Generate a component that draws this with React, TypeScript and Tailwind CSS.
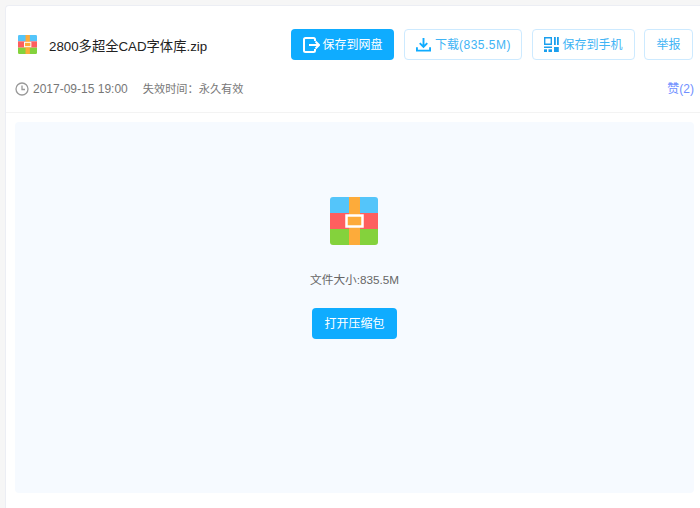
import React from "react";

const fontStack = "font-['Liberation_Sans','Noto_Sans_CJK_SC',sans-serif]";

const ZipIcon = ({ className }: { className: string }) => (
  <svg viewBox="0 0 48 48" className={className}>
    <defs>
      <clipPath id="zip-clip">
        <rect width="48" height="48" rx="3" />
      </clipPath>
    </defs>
    <g clipPath="url(#zip-clip)">
      <rect width="48" height="16" fill="#54c5fa" />
      <rect y="16" width="48" height="16" fill="#fe5f5f" />
      <rect y="32" width="48" height="16" fill="#84d23c" />
      <rect x="19" width="11" height="48" fill="#fdab3a" />
      <rect x="16.5" y="18.5" width="16" height="11" fill="#fdab3a" stroke="#fff" strokeWidth="2.5" />
    </g>
  </svg>
);

const SaveIcon = () => (
  <svg viewBox="0 0 18 18" className="h-[18px] w-[18px]" fill="none" stroke="#fff" strokeWidth="2">
    <path d="M13 5V3.5A1.5 1.5 0 0 0 11.5 2H3.5A1.5 1.5 0 0 0 2 3.5v11A1.5 1.5 0 0 0 3.5 16h8a1.5 1.5 0 0 0 1.5-1.5V13" />
    <path d="M7 9h10M13.5 5.5 17 9l-3.5 3.5" />
  </svg>
);

const DownloadIcon = () => (
  <svg viewBox="0 0 16 16" className="h-[15px] w-[15px]" fill="none" stroke="#0facff" strokeWidth="2">
    <path d="M8 1v9M4 6.5 8 10.5l4-4" />
    <path d="M1 11v3.5h14V11" />
  </svg>
);

const QrIcon = () => (
  <svg viewBox="0 0 15 15" className="h-[15px] w-[15px]" fill="#1a9fee">
    <path d="M0 0h8v8H0zM1.4 1.4v5.2h5.2V1.4z" fillRule="evenodd" />
    <rect x="10" y="0" width="1.8" height="8" />
    <rect x="13" y="0" width="1.8" height="8" />
    <rect x="0" y="9.5" width="8" height="1.5" />
    <rect x="0" y="12.3" width="3" height="2.7" />
    <rect x="4.5" y="12.3" width="3.5" height="2.7" />
    <rect x="10" y="10" width="4.8" height="5" />
  </svg>
);

const ClockIcon = () => (
  <svg viewBox="0 0 14 14" className="h-[14px] w-[14px]" fill="none" stroke="#999" strokeWidth="1.3">
    <circle cx="7" cy="7" r="6" />
    <path d="M7 3.5V7.5H10" />
  </svg>
);

const OutlineButton = ({ className, children }: { className: string; children: React.ReactNode }) => (
  <div className={`flex h-[31px] items-center justify-center rounded-[4px] border border-[#cdeaff] bg-white text-[12px] text-[#3fb4f5] ${className}`}>
    {children}
  </div>
);

export default function App() {
  return (
    <div className={`h-[508px] w-[700px] overflow-hidden bg-[#f6f6f6] pl-[5px] pt-[5px] ${fontStack}`}>
      <div className="h-full rounded-tl-[4px] border-l-[1px] border-t-[1px] border-[#eceef4] bg-white">
        <div className="flex h-[107px] flex-col border-b border-[#f3f3f3] pl-[9px] pr-[6px]">
          <div className="mt-[23px] flex items-center">
            <ZipIcon className="ml-[3px] h-[19px] w-[19px]" />
            <div className="ml-[12px] mt-[4px] text-[13.3px] text-[#222]">2800多超全CAD字体库.zip</div>
            <div className="ml-auto mr-[1px] flex">
              <div className="flex h-[31px] w-[103px] items-center justify-center gap-[2px] rounded-[4px] bg-[#0facff] text-[12px] text-white">
                <SaveIcon />
                保存到网盘
              </div>
              <OutlineButton className="ml-[10px] w-[118px] gap-[4px] pl-[1px]">
                <DownloadIcon />
                <span>
                  下载<span className="tracking-[0.5px]">(835.5M)</span>
                </span>
              </OutlineButton>
              <OutlineButton className="ml-[10px] w-[103px] gap-[3px]">
                <QrIcon />
                保存到手机
              </OutlineButton>
              <OutlineButton className="ml-[9px] w-[49px]">举报</OutlineButton>
            </div>
          </div>
          <div className="mt-[20px] flex items-center text-[12px] text-[#777]">
            <ClockIcon />
            <span className="ml-[4px]">2017-09-15 19:00</span>
            <span className="ml-[15px] text-[11.2px]">失效时间：永久有效</span>
            <span className="ml-auto text-[#6f8fff]">赞(2)</span>
          </div>
        </div>
        <div className="ml-[9px] mr-[6px] mt-[9px] flex h-[371px] flex-col items-center rounded-[4px] bg-[#f6faff]">
          <ZipIcon className="mr-[1px] mt-[75px] h-[48px] w-[48px]" />
          <div className="mt-[27px] text-[11.7px] leading-[16px] text-[#666]">文件大小:835.5M</div>
          <div className="mt-[20px] flex h-[31px] w-[85px] items-center justify-center rounded-[4px] bg-[#0facff] text-[12px] text-white">
            打开压缩包
          </div>
        </div>
      </div>
    </div>
  );
}
